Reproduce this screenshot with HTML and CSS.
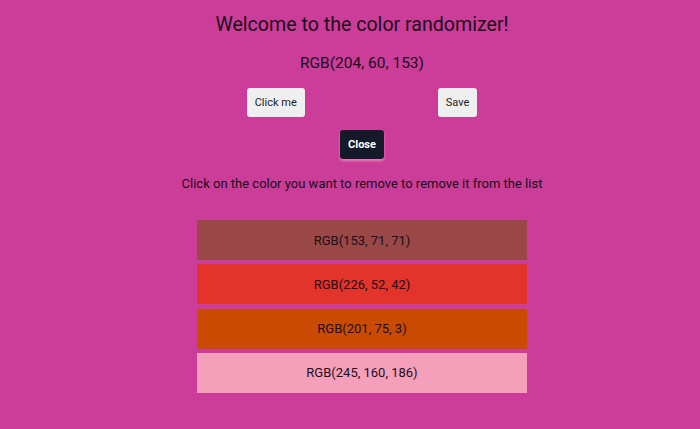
FILE: index.html
```html
<!DOCTYPE html>
<html>
<head>
<meta charset="utf-8">
<link rel="stylesheet" href="styles.css">
</head>
<body>
<div class="app">
  <h1 class="title">Welcome to the color randomizer!</h1>
  <p class="current">RGB(204, 60, 153)</p>
  <div class="actions">
    <button class="btn light">Click me</button>
    <button class="btn light">Save</button>
  </div>
  <div class="close-row">
    <button class="btn dark">Close</button>
  </div>
  <p class="hint">Click on the color you want to remove to remove it from the list</p>
  <ul class="list">
    <li class="item" style="background: rgb(153, 71, 71)">RGB(153, 71, 71)</li>
    <li class="item" style="background: rgb(226, 52, 42)">RGB(226, 52, 42)</li>
    <li class="item" style="background: rgb(201, 75, 3)">RGB(201, 75, 3)</li>
    <li class="item" style="background: rgb(245, 160, 186)">RGB(245, 160, 186)</li>
  </ul>
</div>
</body>
</html>
```
FILE: styles.css
```css
html, body {
  margin: 0;
  padding: 0;
  background: rgb(204, 60, 153);
  font-family: Roboto, "Liberation Sans", sans-serif;
  color: #1a0f1a;
}
.app {
  padding-left: 24px;
  display: flex;
  flex-direction: column;
  align-items: center;
}
.title {
  font-size: 19.6px;
  font-weight: 400;
  margin: 13px 0 0;
  line-height: 24px;
}
.current {
  font-size: 15.5px;
  margin: 17px 0 0;
  line-height: 18px;
}
.actions {
  margin-top: 16px;
  display: flex;
  gap: 133px;
}
.btn {
  font-family: Roboto, "Liberation Sans", sans-serif;
  font-size: 11px;
  height: 29px;
  padding: 0 8px;
  border: none;
  border-radius: 3px;
}
.light {
  background: #efefef;
  color: #222;
}
.dark {
  background: #141a29;
  color: #fff;
  font-weight: 700;
  padding: 0 8px;
  box-shadow: 0 2px 3px rgba(255, 200, 230, 0.5);
}
.close-row {
  margin-top: 13px;
}
.hint {
  font-size: 13px;
  margin: 16px 0 0;
  line-height: 17px;
}
.list {
  list-style: none;
  margin: 28px 0 0;
  padding: 0;
  width: 330px;
  display: flex;
  flex-direction: column;
  gap: 4.3px;
}
.item {
  height: 40px;
  display: flex;
  align-items: center;
  justify-content: center;
  font-size: 13px;
}
```
